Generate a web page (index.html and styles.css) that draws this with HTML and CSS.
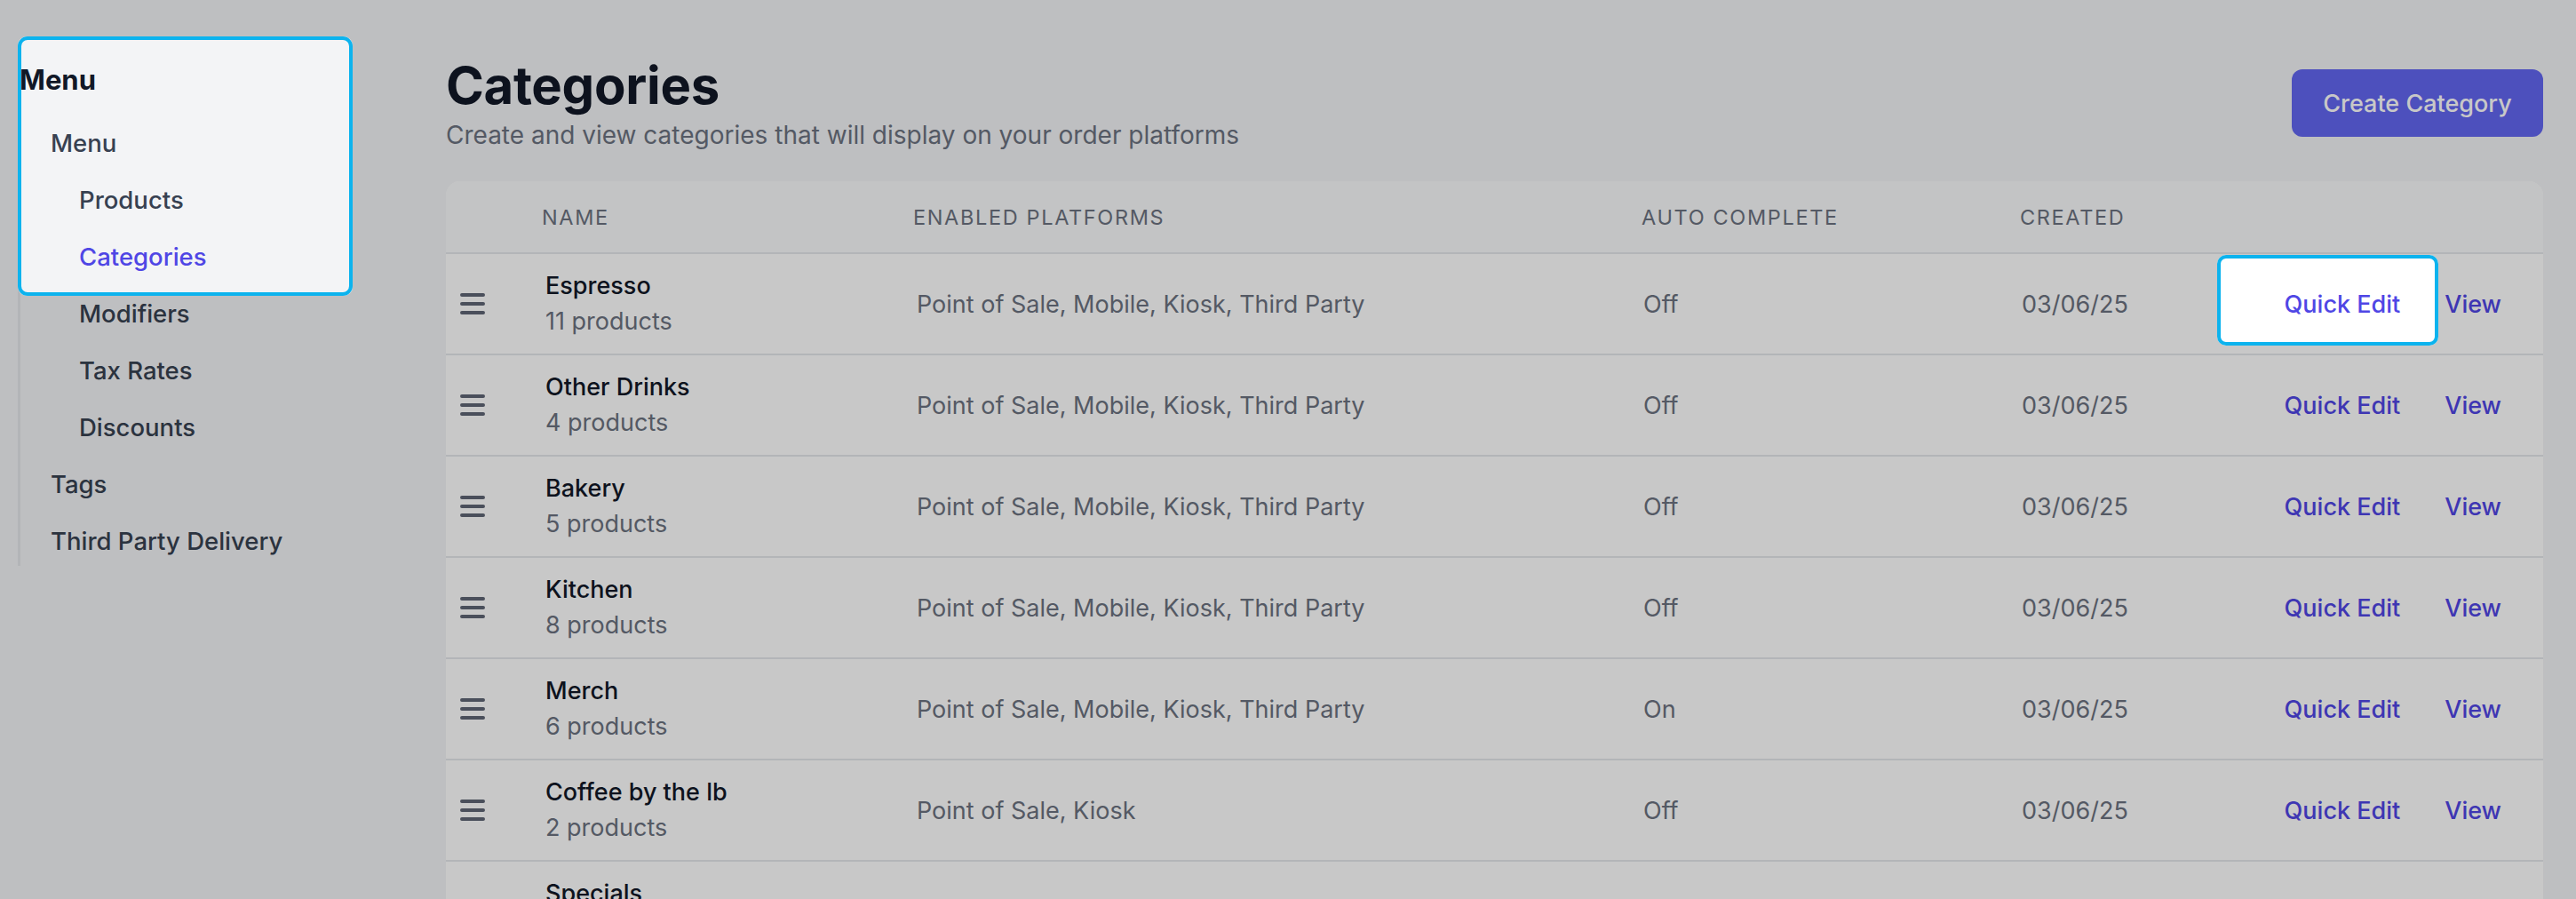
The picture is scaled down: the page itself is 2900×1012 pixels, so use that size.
FILE: index.html
```html
<!DOCTYPE html>
<html lang="en">
<head>
<meta charset="utf-8">
<title>Categories</title>
<link rel="stylesheet" href="styles.css">
</head>
<body>
<div class="app">
  <aside class="sidebar">
    <h2 class="side-title">Menu</h2>
    <ul class="nav">
      <li class="nav-item">Menu</li>
      <li class="nav-item sub">Products</li>
      <li class="nav-item sub active">Categories</li>
      <li class="nav-item sub">Modifiers</li>
      <li class="nav-item sub">Tax Rates</li>
      <li class="nav-item sub">Discounts</li>
      <li class="nav-item">Tags</li>
      <li class="nav-item">Third Party Delivery</li>
    </ul>
  </aside>
  <main class="main">
    <header class="page-head">
      <div class="head-text">
        <h1 class="title">Categories</h1>
        <p class="subtitle">Create and view categories that will display on your order platforms</p>
      </div>
      <button class="btn-primary">Create Category</button>
    </header>
    <section class="card">
      <div class="row head">
        <div></div>
        <div class="th">Name</div>
        <div class="th">Enabled Platforms</div>
        <div class="th shift">Auto Complete</div>
        <div class="th shift">Created</div>
        <div></div>
      </div>
      <div class="row">
        <div class="handle"><svg viewBox="0 0 28 24" width="28" height="24"><path d="M2 2H26M2 12H26M2 22H26"/></svg></div>
        <div class="name"><div class="n">Espresso</div><div class="c">11 products</div></div>
        <div class="td">Point of Sale, Mobile, Kiosk, Third Party</div>
        <div class="td">Off</div>
        <div class="td">03/06/25</div>
        <div class="actions"><a class="link">Quick Edit</a><a class="link">View</a></div>
      </div>
      <div class="row">
        <div class="handle"><svg viewBox="0 0 28 24" width="28" height="24"><path d="M2 2H26M2 12H26M2 22H26"/></svg></div>
        <div class="name"><div class="n">Other Drinks</div><div class="c">4 products</div></div>
        <div class="td">Point of Sale, Mobile, Kiosk, Third Party</div>
        <div class="td">Off</div>
        <div class="td">03/06/25</div>
        <div class="actions"><a class="link">Quick Edit</a><a class="link">View</a></div>
      </div>
      <div class="row">
        <div class="handle"><svg viewBox="0 0 28 24" width="28" height="24"><path d="M2 2H26M2 12H26M2 22H26"/></svg></div>
        <div class="name"><div class="n">Bakery</div><div class="c">5 products</div></div>
        <div class="td">Point of Sale, Mobile, Kiosk, Third Party</div>
        <div class="td">Off</div>
        <div class="td">03/06/25</div>
        <div class="actions"><a class="link">Quick Edit</a><a class="link">View</a></div>
      </div>
      <div class="row">
        <div class="handle"><svg viewBox="0 0 28 24" width="28" height="24"><path d="M2 2H26M2 12H26M2 22H26"/></svg></div>
        <div class="name"><div class="n">Kitchen</div><div class="c">8 products</div></div>
        <div class="td">Point of Sale, Mobile, Kiosk, Third Party</div>
        <div class="td">Off</div>
        <div class="td">03/06/25</div>
        <div class="actions"><a class="link">Quick Edit</a><a class="link">View</a></div>
      </div>
      <div class="row">
        <div class="handle"><svg viewBox="0 0 28 24" width="28" height="24"><path d="M2 2H26M2 12H26M2 22H26"/></svg></div>
        <div class="name"><div class="n">Merch</div><div class="c">6 products</div></div>
        <div class="td">Point of Sale, Mobile, Kiosk, Third Party</div>
        <div class="td">On</div>
        <div class="td">03/06/25</div>
        <div class="actions"><a class="link">Quick Edit</a><a class="link">View</a></div>
      </div>
      <div class="row">
        <div class="handle"><svg viewBox="0 0 28 24" width="28" height="24"><path d="M2 2H26M2 12H26M2 22H26"/></svg></div>
        <div class="name"><div class="n">Coffee by the lb</div><div class="c">2 products</div></div>
        <div class="td">Point of Sale, Kiosk</div>
        <div class="td">Off</div>
        <div class="td">03/06/25</div>
        <div class="actions"><a class="link">Quick Edit</a><a class="link">View</a></div>
      </div>
      <div class="row">
        <div class="handle"><svg viewBox="0 0 28 24" width="28" height="24"><path d="M2 2H26M2 12H26M2 22H26"/></svg></div>
        <div class="name"><div class="n">Specials</div><div class="c">3 products</div></div>
        <div class="td">Point of Sale, Mobile, Kiosk</div>
        <div class="td">Off</div>
        <div class="td">03/06/25</div>
        <div class="actions"><a class="link">Quick Edit</a><a class="link">View</a></div>
      </div>
    </section>
  </main>
</div>
<svg class="tour-overlay" viewBox="0 0 2900 1012" width="2900" height="1012">
  <path class="dim" fill-rule="evenodd" d="M0 0H2900V1012H0Z M30 41H387A10 10 0 0 1 397 51V323A10 10 0 0 1 387 333H30A10 10 0 0 1 20 323V51A10 10 0 0 1 30 41Z M2506 287H2735A10 10 0 0 1 2745 297V379A10 10 0 0 1 2735 389H2506A10 10 0 0 1 2496 379V297A10 10 0 0 1 2506 287Z"/>
  <rect class="ring" x="22" y="43" width="373" height="288" rx="9"/>
  <rect class="ring" x="2498" y="289" width="245" height="98" rx="8"/>
</svg>
</body>
</html>
```
FILE: styles.css
```css
* { box-sizing: border-box; }
html, body {
  margin: 0;
  padding: 0;
  height: 100%;
  overflow: hidden;
  background: #f3f4f6;
  font-family: Inter, "Noto Sans", "Liberation Sans", sans-serif;
  color: #111827;
}
.app {
  display: flex;
  height: 1012px;
  overflow: hidden;
}
.sidebar {
  width: 502px;
  flex: none;
  padding: 70px 0 0 20px;
}
.side-title {
  margin: 0 0 0 2px;
  font-size: 31px;
  line-height: 40px;
  font-weight: 700;
  color: #111827;
}
.nav {
  list-style: none;
  margin: 23px 0 0 0;
  padding: 0;
  border-left: 3px solid #e5e7eb;
  display: flex;
  flex-direction: column;
  gap: 8px;
  width: 360px;
}
.nav-item {
  margin-left: -3px;
  border-left: 3px solid transparent;
  height: 56px;
  line-height: 56px;
  font-size: 27.5px;
  font-weight: 500;
  color: #374151;
  padding-left: 34px;
  white-space: nowrap;
}
.nav-item.sub { padding-left: 66px; }
.nav-item.active {
  border-left-color: #4f46e5;
  color: #4f46e5;
}
.main {
  flex: 1;
  min-width: 0;
  padding: 64px 37px 0 0;
}
.page-head {
  display: flex;
  justify-content: space-between;
  align-items: flex-start;
}
.title {
  margin: 0;
  font-size: 58px;
  line-height: 64px;
  font-weight: 700;
  letter-spacing: -0.3px;
  color: #111827;
}
.subtitle {
  margin: 4px 0 0 0;
  font-size: 28px;
  line-height: 40px;
  color: #6b7280;
}
.btn-primary {
  margin-top: 14px;
  height: 76px;
  width: 283px;
  border: 0;
  border-radius: 12px;
  background: #6366f1;
  color: #ffffff;
  font-family: inherit;
  font-size: 27px;
  font-weight: 500;
  padding: 0;
}
.card {
  margin-top: 32px;
  background: #ffffff;
  border-radius: 16px 16px 0 0;
  overflow: hidden;
}
.row {
  display: grid;
  grid-template-columns: 108px 418px 818px 426px 280px 1fr;
  align-items: center;
  height: 114px;
  border-top: 2px solid #e5e7eb;
}
.row.head {
  height: 80px;
  border-top: 0;
  background: #f9fafb;
}
.th {
  font-size: 23.5px;
  font-weight: 400;
  letter-spacing: 0.07em;
  text-transform: uppercase;
  color: #6b7280;
}
.th.shift { padding-left: 2px; }
.handle {
  padding-left: 16px;
  display: flex;
  align-items: center;
}
.handle svg {
  display: block;
  stroke: #5f6574;
  stroke-width: 4;
  stroke-linecap: round;
  fill: none;
}
.name { font-size: 27px; line-height: 40px; padding-left: 4px; }
.name .n { color: #111827; font-weight: 500; }
.name .c { color: #6b7280; }
.td {
  font-size: 27px;
  color: #6b7280;
  white-space: nowrap;
  padding-left: 4px;
}
.actions {
  display: flex;
  justify-content: flex-end;
  gap: 50px;
  padding-right: 47px;
}
.link {
  font-size: 27px;
  font-weight: 500;
  color: #4f46e5;
  text-decoration: none;
  white-space: nowrap;
}
.tour-overlay {
  position: absolute;
  top: 0;
  left: 0;
  pointer-events: none;
}
.tour-overlay .dim { fill: rgba(0, 0, 0, 0.216); }
.tour-overlay .ring {
  fill: none;
  stroke: #0cb3ee;
  stroke-width: 4;
}
```
